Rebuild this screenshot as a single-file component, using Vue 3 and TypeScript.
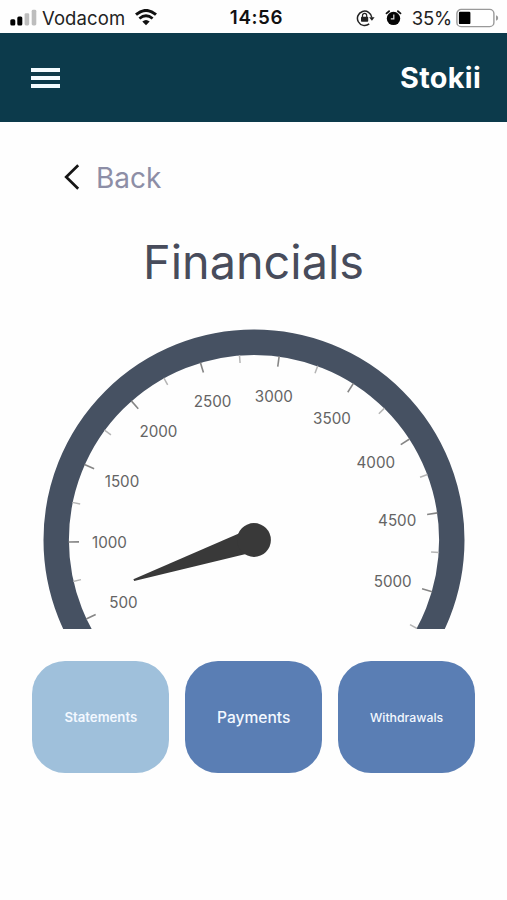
<script setup lang="ts">
import { computed, ref } from 'vue'

interface Tick { x1: number; y1: number; x2: number; y2: number; major: boolean }
interface Label { value: number; x: number; y: number }

const CX = 254
const CY = 220
const INNER = 185.5
const STEP = 24.6

const ticks = computed<Tick[]>(() => {
  const list: Tick[] = []
  for (let i = 1; i <= 20; i++) {
    const major = i % 2 === 1
    const deg = -25.2 - STEP / 2 + (i * STEP) / 2
    const a = ((180 + deg) * Math.PI) / 180
    const end = INNER - (major ? 10.5 : 8)
    list.push({
      x1: CX + INNER * Math.cos(a),
      y1: CY + INNER * Math.sin(a),
      x2: CX + end * Math.cos(a),
      y2: CY + end * Math.sin(a),
      major,
    })
  }
  return list
})

const labels: Label[] = [
  { value: 500, x: 123.4, y: 287.5 },
  { value: 1000, x: 109.5, y: 227.5 },
  { value: 1500, x: 122, y: 166.7 },
  { value: 2000, x: 158.4, y: 116.9 },
  { value: 2500, x: 212.5, y: 86.7 },
  { value: 3000, x: 273.9, y: 82.3 },
  { value: 3500, x: 332, y: 103.5 },
  { value: 4000, x: 375.8, y: 147.6 },
  { value: 4500, x: 397.2, y: 205.5 },
  { value: 5000, x: 392.7, y: 266.9 },
]

const active = ref('Statements')
const tabs = ['Statements', 'Payments', 'Withdrawals']
</script>

<template>
  <div class="screen">
    <div class="status">
      <div class="side">
        <svg class="signal" width="27" height="17" viewBox="0 0 27 17">
          <rect x="0.3" y="10.3" width="5" height="6.2" rx="1.5" fill="#000" />
          <rect x="7.3" y="7.5" width="5" height="9" rx="1.5" fill="#000" />
          <rect x="14.6" y="4.2" width="4.6" height="12.3" rx="1.4" fill="#bdbdbd" />
          <rect x="21.7" y="0.8" width="4.6" height="15.7" rx="1.4" fill="#bdbdbd" />
        </svg>
        <span class="carrier">Vodacom</span>
        <svg class="wifi" width="22" height="17" viewBox="0 0 22 17">
          <path d="M1 5.7Q11-2.8 21 5.7" fill="none" stroke="#111" stroke-width="3" />
          <path d="M4.4 9.5Q11 4 17.6 9.5" fill="none" stroke="#111" stroke-width="2.8" />
          <path d="M7.3 12.6Q11 9.3 14.7 12.6L11 16.2Z" fill="#111" />
        </svg>
      </div>
      <span class="clock">14:56</span>
      <div class="side right">
        <svg class="lock" width="19" height="18" viewBox="0 0 19 18">
          <path d="M13.2 14.9A7.2 7.2 0 1 1 15.8 8.5" fill="none" stroke="#222" stroke-width="1.5" />
          <path d="M13.1 8.3H18.6L15.9 11.7Z" fill="#222" />
          <rect x="5" y="7.8" width="7.2" height="5" rx="0.7" fill="#222" />
          <path d="M6.5 8V6.4a2.1 2.1 0 0 1 4.2 0V8" fill="none" stroke="#222" stroke-width="1.2" />
        </svg>
        <svg class="alarm" width="17" height="18" viewBox="0 0 17 18">
          <circle cx="8.5" cy="9.4" r="6.7" fill="#050505" />
          <path d="M1.5 4.4L4.1 2.2M12.9 2.2L15.5 4.4" stroke="#111" stroke-width="1.8" stroke-linecap="round" />
          <path d="M8.8 5.5V9.9H5.8" fill="none" stroke="#ddd" stroke-width="1.2" />
        </svg>
        <span class="percent">35%</span>
        <svg class="battery" width="43" height="20" viewBox="0 0 43 20">
          <rect x="0.9" y="1.4" width="37" height="17.2" rx="4.2" fill="#fff" stroke="#999" stroke-width="1.4" />
          <rect x="2.9" y="3.7" width="11.5" height="12.4" rx="1.2" fill="#000" />
          <path d="M40 7.2Q42.2 7.7 42.2 10T40 12.8Z" fill="#999" />
        </svg>
      </div>
    </div>

    <header class="bar">
      <button class="menu" aria-label="Menu"><i></i><i></i><i></i></button>
      <span class="brand">Stokii</span>
    </header>

    <main>
      <a class="back">
        <svg width="16" height="26" viewBox="0 0 16 26">
          <path d="M14.2 1.3L2.2 13L14.2 24.7" fill="none" stroke="#151515" stroke-width="2.7" />
        </svg>
        <span>Back</span>
      </a>
      <h1>Financials</h1>

      <svg class="gauge" width="507" height="309" viewBox="0 0 507 309">
        <circle :cx="CX" :cy="CY" r="197.8" fill="none" stroke="#465162" stroke-width="25.4" />
        <line
          v-for="(t, i) in ticks" :key="i"
          :x1="t.x1" :y1="t.y1" :x2="t.x2" :y2="t.y2"
          :class="t.major ? 'major' : 'minor'"
        />
        <text v-for="l in labels" :key="l.value" :x="l.x" :y="l.y">{{ l.value }}</text>
        <path d="M133.4 259.2L134.2 261L250 233L244 211.3Z" fill="#393939" />
        <circle :cx="CX" :cy="CY" r="16.9" fill="#393939" />
      </svg>

      <nav class="tabs">
        <button
          v-for="t in tabs" :key="t"
          :class="['tab', t.toLowerCase(), { active: active === t }]"
          @click="active = t"
        >{{ t }}</button>
      </nav>
    </main>
  </div>
</template>

<style>
body {
  background: #fefefe;
}
</style>

<style scoped>
.screen {
  width: 507px;
  height: 900px;
  overflow: hidden;
  background: #fefefe;
  font-family: Inter, Roboto, sans-serif;
}
.status {
  display: grid;
  grid-template-columns: 1fr auto 1fr;
  align-items: center;
  height: 33px;
  padding: 2px 8px 0 10px;
  box-sizing: border-box;
  color: #222;
}
.side {
  display: flex;
  align-items: center;
}
.right {
  justify-content: flex-end;
}
.signal {
  margin-right: 5px;
}
.carrier {
  font-size: 18.5px;
  letter-spacing: 0.1px;
}
.wifi {
  margin-left: 10px;
}
.clock {
  padding-left: 4px;
  font-size: 18.8px;
  font-weight: 600;
  letter-spacing: 0.6px;
  color: #111;
}
.alarm {
  margin: 0 10px 0 10px;
}
.percent {
  font-size: 18.5px;
  letter-spacing: -0.2px;
}
.battery {
  margin-left: 4px;
}
.bar {
  display: flex;
  align-items: center;
  justify-content: space-between;
  height: 89px;
  padding: 0 26px 0 31px;
  box-sizing: border-box;
  background: #0c3a4b;
}
.menu {
  display: flex;
  flex-direction: column;
  gap: 4px;
  padding: 0;
  border: 0;
  background: none;
}
.menu i {
  width: 29px;
  height: 4px;
  background: #f3fbff;
}
.brand {
  color: #fff;
  font-size: 28.8px;
  font-weight: 700;
  letter-spacing: 0.3px;
}
.back {
  display: flex;
  align-items: center;
  gap: 16px;
  height: 34px;
  margin-top: 38px;
  padding-left: 64px;
  color: #8d8ea6;
  font-size: 28px;
}
.back span {
  padding-top: 2px;
}
h1 {
  height: 60px;
  margin: 38px 0 28px;
  color: #484c5b;
  font-size: 46.8px;
  font-weight: 400;
  line-height: 60px;
  text-align: center;
}
.gauge {
  display: block;
}
.gauge text {
  fill: #646464;
  font-size: 15.2px;
  text-anchor: middle;
}
.major {
  stroke: #858585;
  stroke-width: 1.6;
}
.minor {
  stroke: #b5b5b5;
  stroke-width: 1.5;
}
.tabs {
  display: flex;
  gap: 16px;
  padding: 32px 32px 0 32.4px;
}
.tab {
  width: 137px;
  height: 112px;
  padding: 0;
  border: 0;
  border-radius: 33px;
  background: #5a7eb4;
  color: #f3f8ff;
  font-family: inherit;
  font-size: 12.3px;
  font-weight: 500;
}
.tab.statements {
  font-size: 13.2px;
  font-weight: 600;
}
.tab.payments {
  font-size: 15.6px;
}
.tab.active {
  background: #9fc0db;
}
</style>
